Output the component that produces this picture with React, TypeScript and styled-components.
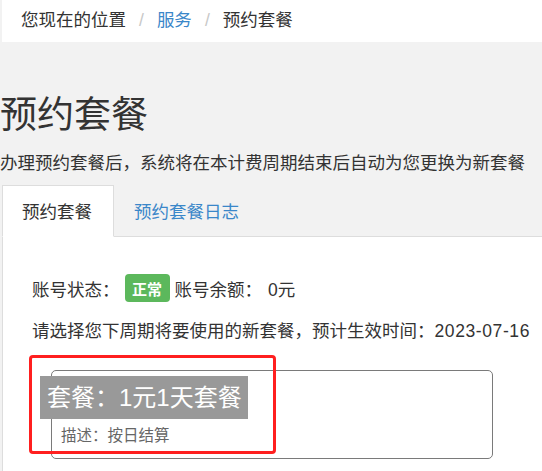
import React from "react";
import styled, { createGlobalStyle } from "styled-components";

const Global = createGlobalStyle`
  html, body {
    margin: 0;
    padding: 0;
    background: #f2f2f2;
    font-family: "Liberation Sans", "Noto Sans CJK SC", sans-serif;
    color: #333;
  }
  * { box-sizing: border-box; }
`;

const Page = styled.div`
  width: 542px;
  min-height: 471px;
  overflow: hidden;
`;

const Breadcrumb = styled.nav`
  margin-left: 2px;
  height: 42px;
  background: #fff;
  display: flex;
  align-items: center;
  padding-left: 19px;
  font-size: 17.5px;
  line-height: 24px;
  padding-bottom: 2px;
`;

const Crumb = styled.span<{ $link?: boolean }>`
  color: ${(p) => (p.$link ? "#3a87c9" : "#333")};
  white-space: nowrap;
`;

const Sep = styled.span`
  color: #c8c8c8;
  padding: 0 13px;
`;

const Header = styled.header`
  padding-top: 54px;
`;

const Title = styled.h1`
  margin: 0;
  font-size: 37px;
  font-weight: normal;
  line-height: 40px;
  color: #333;
  letter-spacing: 0;
`;

const Subtitle = styled.p`
  margin: 15px 0 0;
  font-size: 17.5px;
  line-height: 24px;
  white-space: nowrap;
`;

const Tabs = styled.div`
  margin: 10px 0 0 2px;
  display: flex;
  border-bottom: 1px solid #ddd;
`;

const Tab = styled.div<{ $active?: boolean }>`
  height: 52px;
  margin-bottom: -1px;
  padding: 0 21px 0 19px;
  font-size: 17.5px;
  line-height: 52px;
  color: ${(p) => (p.$active ? "#333" : "#3a87c9")};
  background: ${(p) => (p.$active ? "#fff" : "transparent")};
  border: 1px solid ${(p) => (p.$active ? "#ddd" : "transparent")};
  border-bottom-color: ${(p) => (p.$active ? "#fff" : "transparent")};
  white-space: nowrap;
`;

const Panel = styled.section`
  margin-left: 2px;
  background: #fff;
  border-left: 1px solid #ddd;
  padding: 37px 0 30px 29px;
  min-height: 240px;
`;

const StatusRow = styled.div`
  display: flex;
  align-items: center;
  height: 28px;
  font-size: 17.5px;
  white-space: nowrap;
`;

const Badge = styled.span`
  display: inline-flex;
  align-items: center;
  justify-content: center;
  width: 45px;
  height: 28px;
  margin: 0 5px;
  border-radius: 4px;
  background: #5cb85c;
  color: #fff;
  font-weight: bold;
  font-size: 15px;
`;

const Amount = styled.span`
  margin-left: 6px;
`;

const Hint = styled.p`
  margin: 17px 0 0;
  font-size: 17.5px;
  line-height: 24px;
  white-space: nowrap;
`;

const DateText = styled.span`
  letter-spacing: 0.6px;
`;

const CardWrap = styled.div`
  position: relative;
  margin: 27px 0 0 19px;
  width: 442px;
`;

const Card = styled.div`
  border: 1px solid #7a7a7a;
  border-radius: 5px;
  padding: 5px 0 9px 9px;
  height: 89px;
`;

const CardTitle = styled.div`
  display: inline-block;
  margin-left: -21px;
  height: 43px;
  padding: 0 6px 0 7px;
  background: #999;
  color: #fff;
  font-size: 24px;
  line-height: 43px;
  white-space: nowrap;
`;

const CardDesc = styled.div`
  margin-top: 4px;
  font-size: 15.5px;
  line-height: 26px;
  color: #666;
  white-space: nowrap;
`;

const Highlight = styled.div`
  position: absolute;
  left: -22px;
  top: -15px;
  width: 247px;
  height: 99px;
  border: 3px solid #ff1f1f;
  border-radius: 4px;
  pointer-events: none;
`;

export default function App() {
  return (
    <Page>
      <Global />
      <Breadcrumb>
        <Crumb>您现在的位置</Crumb>
        <Sep>/</Sep>
        <Crumb $link>服务</Crumb>
        <Sep>/</Sep>
        <Crumb>预约套餐</Crumb>
      </Breadcrumb>
      <Header>
        <Title>预约套餐</Title>
        <Subtitle>办理预约套餐后，系统将在本计费周期结束后自动为您更换为新套餐</Subtitle>
      </Header>
      <Tabs>
        <Tab $active>预约套餐</Tab>
        <Tab>预约套餐日志</Tab>
      </Tabs>
      <Panel>
        <StatusRow>
          <span>账号状态：</span>
          <Badge>正常</Badge>
          <span>账号余额：</span>
          <Amount>0元</Amount>
        </StatusRow>
        <Hint>
          请选择您下周期将要使用的新套餐，预计生效时间：<DateText>2023-07-16</DateText>
        </Hint>
        <CardWrap>
          <Card>
            <CardTitle>套餐：1元1天套餐</CardTitle>
            <CardDesc>描述：按日结算</CardDesc>
          </Card>
          <Highlight />
        </CardWrap>
      </Panel>
    </Page>
  );
}
